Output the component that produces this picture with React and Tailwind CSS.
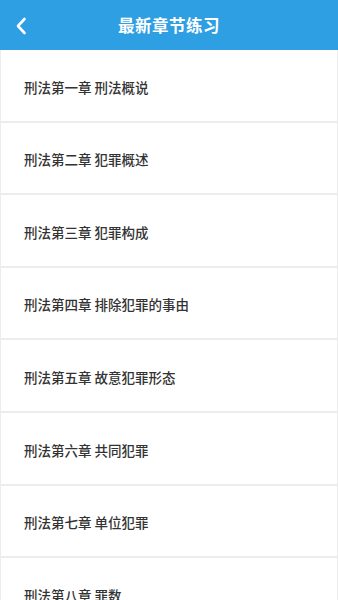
import React from "react";

export default function App() {
  const chapters = [
    "刑法第一章 刑法概说",
    "刑法第二章 犯罪概述",
    "刑法第三章 犯罪构成",
    "刑法第四章 排除犯罪的事由",
    "刑法第五章 故意犯罪形态",
    "刑法第六章 共同犯罪",
    "刑法第七章 单位犯罪",
    "刑法第八章 罪数",
  ];

  return (
    <div
      className="w-[338px] h-[600px] overflow-hidden bg-[#f2f2f2]"
      style={{ fontFamily: '"Noto Sans CJK SC", "Noto Sans", sans-serif' }}
    >
      {/* header */}
      <div className="relative h-[50px] bg-[#2e9fe3] flex items-center justify-center">
        <button className="absolute left-[13px] top-[15px] p-[2px]">
          <svg width="12" height="18" viewBox="0 0 12 18" fill="none">
            <path
              d="M9.5 2L3 9l6.5 7"
              stroke="white"
              strokeWidth="2.6"
              strokeLinecap="round"
              strokeLinejoin="round"
            />
          </svg>
        </button>
        <h1 className="text-white text-[16.5px] font-bold tracking-[0.5px]">最新章节练习</h1>
      </div>

      {/* list */}
      <ul>
        {chapters.map((c) => (
          <li
            key={c}
            className="h-[72.6px] bg-white border-x border-[#ececec] border-b-2 border-b-[#ececec] flex items-center pl-[23px] pt-[3px]"
          >
            <span className="text-[13.5px] font-medium text-[#333333]">{c}</span>
          </li>
        ))}
      </ul>
    </div>
  );
}
